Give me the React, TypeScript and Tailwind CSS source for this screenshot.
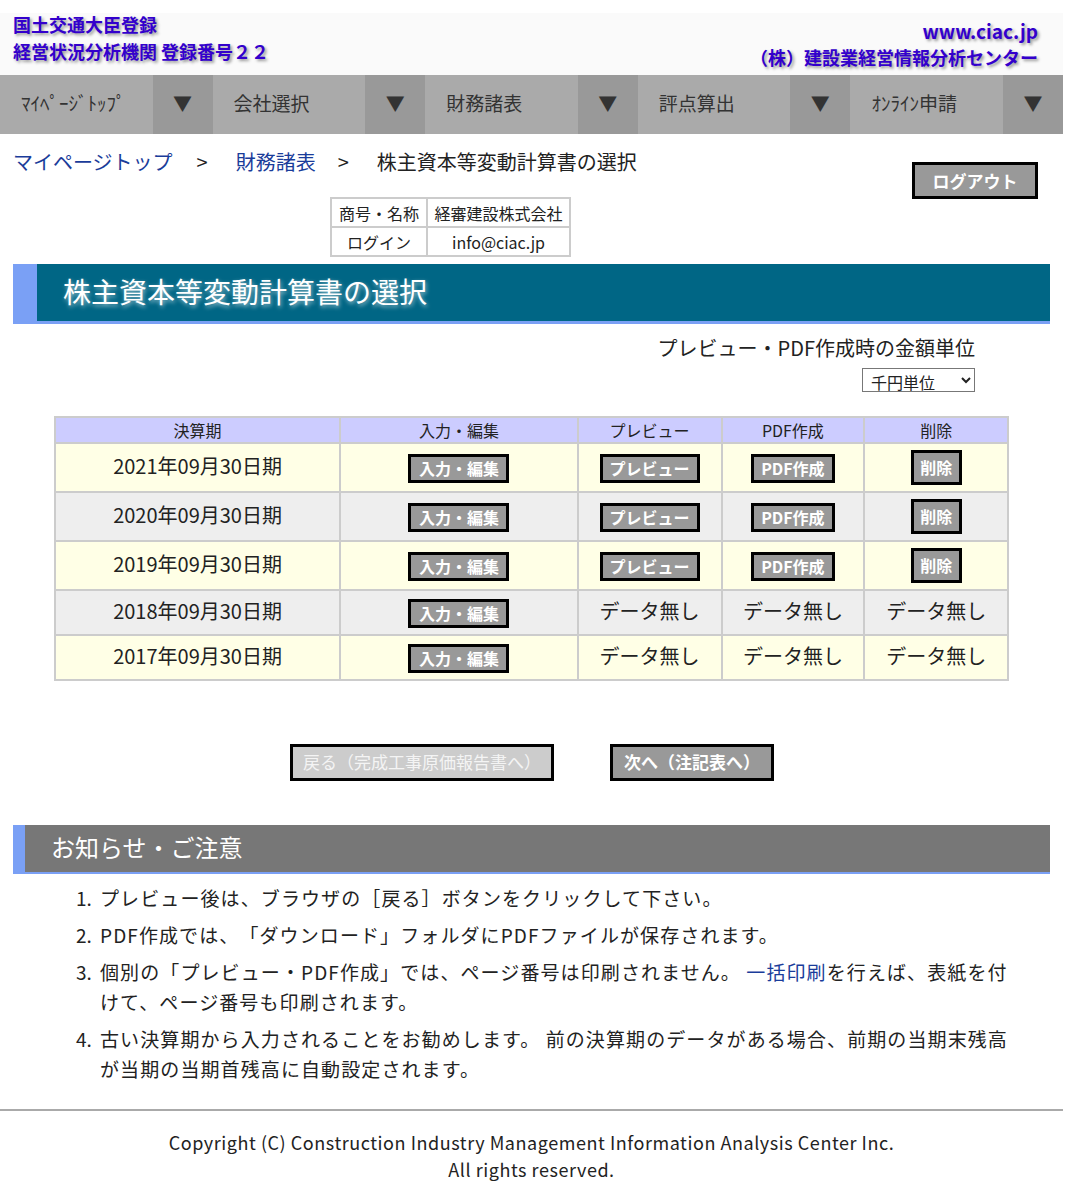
import React from 'react';

const navItems = ['ﾏｲﾍﾟｰｼﾞﾄｯﾌﾟ', '会社選択', '財務諸表', '評点算出', 'ｵﾝﾗｲﾝ申請'];

type Row = { period: string; hasData: boolean; bg: string };

const rows: Row[] = [
  { period: '2021年09月30日期', hasData: true, bg: 'bg-[#ffffe6]' },
  { period: '2020年09月30日期', hasData: true, bg: 'bg-[#eeeeee]' },
  { period: '2019年09月30日期', hasData: true, bg: 'bg-[#ffffe6]' },
  { period: '2018年09月30日期', hasData: false, bg: 'bg-[#eeeeee]' },
  { period: '2017年09月30日期', hasData: false, bg: 'bg-[#ffffe6]' },
];

function GrayButton({ label, className = '' }: { label: string; className?: string }) {
  return (
    <button
      className={`border-[3px] border-black bg-[#999999] px-[6px] text-[16px] font-bold leading-[23px] text-white ${className}`}
    >
      {label}
    </button>
  );
}

export default function App() {
  return (
    <div
      className="w-[1069px] bg-white text-[#222] [text-spacing-trim:space-all]"
      style={{ fontFamily: '"Noto Sans CJK JP", "Noto Sans", sans-serif' }}
    >
      <div className="w-[1063px] pt-[13px]">
        {/* Header */}
        <div className="flex h-[62px] justify-between bg-[#fafafa] px-[13px] font-bold text-[#3300cc] [text-shadow:2px_2px_3px_#999]">
          <div className="-mt-[2px] text-[18px] leading-[27px]">
            <div>国土交通大臣登録</div>
            <div>経営状況分析機関 登録番号２２</div>
          </div>
          <div className="pr-[12px] pt-[5px] text-right text-[18px] leading-[26px]">
            <div className="text-[19px]">www.ciac.jp</div>
            <div>（株）建設業経営情報分析センター</div>
          </div>
        </div>

        {/* Nav */}
        <div className="flex h-[59px] bg-[#aaaaaa]">
          {navItems.map((item, i) => (
            <div key={i} className="flex flex-1">
              <div className="flex flex-1 items-center pb-[2px] pl-[21px] text-[19px] text-[#333]">{item}</div>
              <div className="flex w-[60px] items-center justify-center bg-[#999999] pb-[2px] text-[19px] text-[#333]">▼</div>
            </div>
          ))}
        </div>

        {/* Breadcrumb + logout */}
        <div className="flex justify-between px-[13px] pt-[14px]">
          <div className="flex text-[20px] leading-[28px]">
            <span className="text-[#1a3c9a]">マイページトップ</span>
            <span className="ml-[24px] mr-[28px]">&gt;</span>
            <span className="text-[#1a3c9a]">財務諸表</span>
            <span className="ml-[22px] mr-[28px]">&gt;</span>
            <span>株主資本等変動計算書の選択</span>
          </div>
          <button className="mr-[12px] mt-[14px] h-[37px] w-[126px] border-[3px] border-black bg-[#999999] text-[17px] font-bold text-white">
            ログアウト
          </button>
        </div>

        {/* Info table */}
        <div className="-mt-[2px] pl-[330px]">
          <table className="border-collapse text-[16px]">
            <tbody>
              <tr>
                <td className="h-[29px] w-[96px] border-2 border-[#cccccc] text-center">商号・名称</td>
                <td className="w-[143px] border-2 border-[#cccccc] px-[6px] text-center">経審建設株式会社</td>
              </tr>
              <tr>
                <td className="h-[29px] border-2 border-[#cccccc] text-center">ログイン</td>
                <td className="border-2 border-[#cccccc] text-center">info@ciac.jp</td>
              </tr>
            </tbody>
          </table>
        </div>

        {/* Title */}
        <div className="ml-[13px] mr-[13px] mt-[7px] flex h-[60px] border-b-[3px] border-[#7aa0f5] bg-[#006685]">
          <div className="w-[24px] bg-[#7aa0f5]" />
          <div className="flex items-center pb-[3px] pl-[26px] text-[28px] text-white [text-shadow:1px_2px_4px_rgba(255,255,255,0.6)]">
            株主資本等変動計算書の選択
          </div>
        </div>

        {/* Unit selector */}
        <div className="mr-[88px] mt-[10px] flex flex-col items-end">
          <div className="text-[20px] leading-[28px]">プレビュー・PDF作成時の金額単位</div>
          <select className="mt-[6px] h-[24px] w-[113px] border border-[#777] bg-white py-0 pl-[4px] text-[16px] leading-[18px]">
            <option>千円単位</option>
          </select>
        </div>

        {/* Period table */}
        <table className="ml-[54px] mt-[24px] w-[955px] border-collapse border-2 border-[#cccccc]">
          <thead>
            <tr className="bg-[#ccccff] text-[16px]">
              <th className="h-[25px] w-[286px] border-2 border-[#cccccc] font-normal">決算期</th>
              <th className="w-[238px] border-2 border-[#cccccc] font-normal">入力・編集</th>
              <th className="w-[144px] border-2 border-[#cccccc] font-normal">プレビュー</th>
              <th className="w-[143px] border-2 border-[#cccccc] font-normal">PDF作成</th>
              <th className="w-[144px] border-2 border-[#cccccc] font-normal">削除</th>
            </tr>
          </thead>
          <tbody>
            {rows.map((row) => (
              <tr key={row.period} className={`${row.bg} text-[20px]`}>
                <td className={`${row.hasData ? 'h-[49px]' : 'h-[45px]'} border-2 border-[#cccccc] pb-[4px] text-center`}>
                  {row.period}
                </td>
                <td className="border-2 border-[#cccccc] text-center">
                  <GrayButton label="入力・編集" className="w-[101px]" />
                </td>
                {row.hasData ? (
                  <>
                    <td className="border-2 border-[#cccccc] text-center">
                      <GrayButton label="プレビュー" className="w-[100px]" />
                    </td>
                    <td className="border-2 border-[#cccccc] text-center">
                      <GrayButton label="PDF作成" className="w-[84px]" />
                    </td>
                    <td className="border-2 border-[#cccccc] text-center">
                      <GrayButton label="削除" className="h-[35px] w-[51px]" />
                    </td>
                  </>
                ) : (
                  <>
                    <td className="border-2 border-[#cccccc] pb-[4px] text-center">データ無し</td>
                    <td className="border-2 border-[#cccccc] pb-[4px] text-center">データ無し</td>
                    <td className="border-2 border-[#cccccc] pb-[4px] text-center">データ無し</td>
                  </>
                )}
              </tr>
            ))}
          </tbody>
        </table>

        {/* Back / next */}
        <div className="mt-[63px] flex pl-[290px]">
          <button className="h-[37px] w-[264px] border-[3px] border-black bg-[#cccccc] pb-[2px] text-[17px] text-[#f4f4f4]">
            戻る（完成工事原価報告書へ）
          </button>
          <button className="ml-[56px] h-[37px] w-[164px] border-[3px] border-black bg-[#999999] pb-[2px] text-[17px] font-bold text-white">
            次へ（注記表へ）
          </button>
        </div>

        {/* Notice */}
        <div className="ml-[13px] mr-[13px] mt-[44px] flex h-[49px] border-b-[2px] border-[#7aa0f5] bg-[#777777]">
          <div className="w-[12px] bg-[#7aa0f5]" />
          <div className="flex items-center pb-[3px] pl-[26px] text-[24px] text-white">お知らせ・ご注意</div>
        </div>

        <ol className="ml-[76px] mr-[48px] mt-[9px] text-[19px] leading-[30px] tracking-[1.1px]">
          <li className="flex">
            <span className="w-[24px] shrink-0 tracking-normal">1.</span>
            <span>プレビュー後は、ブラウザの［戻る］ボタンをクリックして下さい。</span>
          </li>
          <li className="mt-[7px] flex">
            <span className="w-[24px] shrink-0 tracking-normal">2.</span>
            <span>PDF作成では、「ダウンロード」フォルダにPDFファイルが保存されます。</span>
          </li>
          <li className="mt-[7px] flex">
            <span className="w-[24px] shrink-0 tracking-normal">3.</span>
            <span>
              個別の「プレビュー・PDF作成」では、ページ番号は印刷されません。 <span className="text-[#1a3c9a]">一括印刷</span>を行えば、表紙を付けて、ページ番号も印刷されます。
            </span>
          </li>
          <li className="mt-[7px] flex">
            <span className="w-[24px] shrink-0 tracking-normal">4.</span>
            <span>
              古い決算期から入力されることをお勧めします。 前の決算期のデータがある場合、前期の当期末残高が当期の当期首残高に自動設定されます。
            </span>
          </li>
        </ol>

        {/* Footer */}
        <div className="mt-[25px] border-t-2 border-[#aaaaaa]" />
        <div className="pb-[12px] pt-[18px] text-center text-[18px] leading-[27px] tracking-[0.55px] text-[#222]">
          <div>Copyright (C) Construction Industry Management Information Analysis Center Inc.</div>
          <div>All rights reserved.</div>
        </div>
      </div>
    </div>
  );
}
